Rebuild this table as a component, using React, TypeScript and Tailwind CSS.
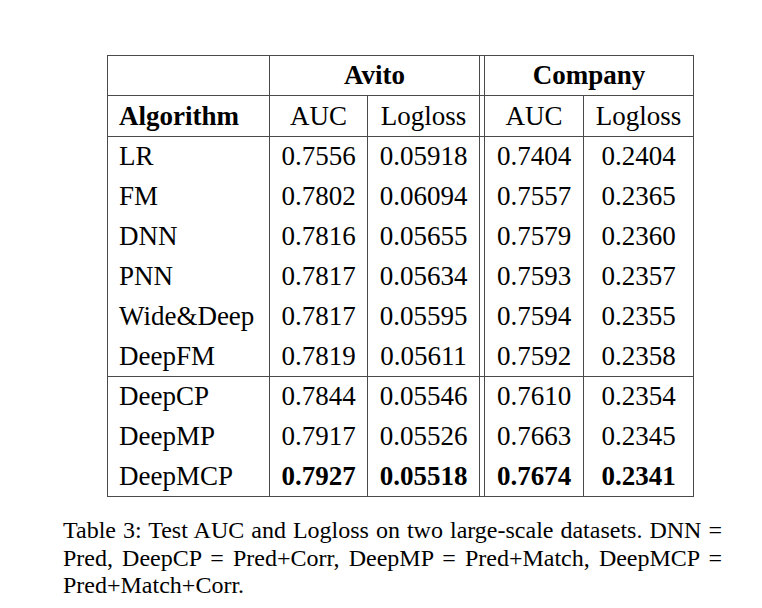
const rows: [string, string, string, string, string][] = [
  ["LR", "0.7556", "0.05918", "0.7404", "0.2404"],
  ["FM", "0.7802", "0.06094", "0.7557", "0.2365"],
  ["DNN", "0.7816", "0.05655", "0.7579", "0.2360"],
  ["PNN", "0.7817", "0.05634", "0.7593", "0.2357"],
  ["Wide&Deep", "0.7817", "0.05595", "0.7594", "0.2355"],
  ["DeepFM", "0.7819", "0.05611", "0.7592", "0.2358"],
];

const ours: [string, string, string, string, string][] = [
  ["DeepCP", "0.7844", "0.05546", "0.7610", "0.2354"],
  ["DeepMP", "0.7917", "0.05526", "0.7663", "0.2345"],
];

const cell = "border-x border-[#4a4a4a] text-center p-0";
const gap = "border-x border-[#4a4a4a] p-0";

const Row = ({ r, bold, topLine }: { r: string[]; bold?: boolean; topLine?: boolean }) => (
  <tr className={topLine ? "h-[40px] border-t border-[#4a4a4a]" : "h-[40px]"}>
    <td className="border-x border-[#4a4a4a] pl-[11px] text-left">{r[0]}</td>
    <td className={`${cell} ${bold ? "font-bold" : ""}`}>{r[1]}</td>
    <td className={`${cell} ${bold ? "font-bold" : ""}`}>{r[2]}</td>
    <td className={gap} />
    <td className={`${cell} ${bold ? "font-bold" : ""}`}>{r[3]}</td>
    <td className={`${cell} ${bold ? "font-bold" : ""}`}>{r[4]}</td>
  </tr>
);

export default function App() {
  return (
    <div className="w-[762px] h-[608px] bg-white text-black font-['Liberation_Serif','Times_New_Roman',serif] overflow-hidden">
      <div className="pt-[55px] pl-[107px]">
        <table className="table-fixed border-collapse border border-[#4a4a4a] text-[27px] leading-none">
          <colgroup>
            <col className="w-[162px]" />
            <col className="w-[98px]" />
            <col className="w-[112px]" />
            <col className="w-[5px]" />
            <col className="w-[99px]" />
            <col className="w-[110px]" />
          </colgroup>
          <thead>
            <tr className="h-[40px] border-b border-[#4a4a4a]">
              <th className="border-x border-[#4a4a4a] p-0" />
              <th colSpan={2} className="border-x border-[#4a4a4a] p-0 font-bold text-center">
                Avito
              </th>
              <th className={gap} />
              <th colSpan={2} className="border-x border-[#4a4a4a] p-0 font-bold text-center">
                Company
              </th>
            </tr>
            <tr className="h-[41px] border-b border-[#4a4a4a]">
              <th className="border-x border-[#4a4a4a] pl-[11px] text-left font-bold">Algorithm</th>
              <th className={`${cell} font-normal`}>AUC</th>
              <th className={`${cell} font-normal`}>Logloss</th>
              <th className={gap} />
              <th className={`${cell} font-normal`}>AUC</th>
              <th className={`${cell} font-normal`}>Logloss</th>
            </tr>
          </thead>
          <tbody>
            {rows.map((r) => (
              <Row key={r[0]} r={r} />
            ))}
            {ours.map((r, i) => (
              <Row key={r[0]} r={r} topLine={i === 0} />
            ))}
            <tr className="h-[40px]">
              <td className="border-x border-[#4a4a4a] pl-[11px] text-left">DeepMCP</td>
              <td className={`${cell} font-bold`}>0.7927</td>
              <td className={`${cell} font-bold`}>0.05518</td>
              <td className={gap} />
              <td className={`${cell} font-bold`}>0.7674</td>
              <td className={`${cell} font-bold`}>0.2341</td>
            </tr>
          </tbody>
        </table>
      </div>
      <p className="mt-[20px] ml-[63px] w-[659px] text-[24px] leading-[27.5px] text-justify">
        Table 3: Test AUC and Logloss on two large-scale datasets. DNN = Pred, DeepCP = Pred+Corr,
        DeepMP = Pred+Match, DeepMCP = Pred+Match+Corr.
      </p>
    </div>
  );
}
